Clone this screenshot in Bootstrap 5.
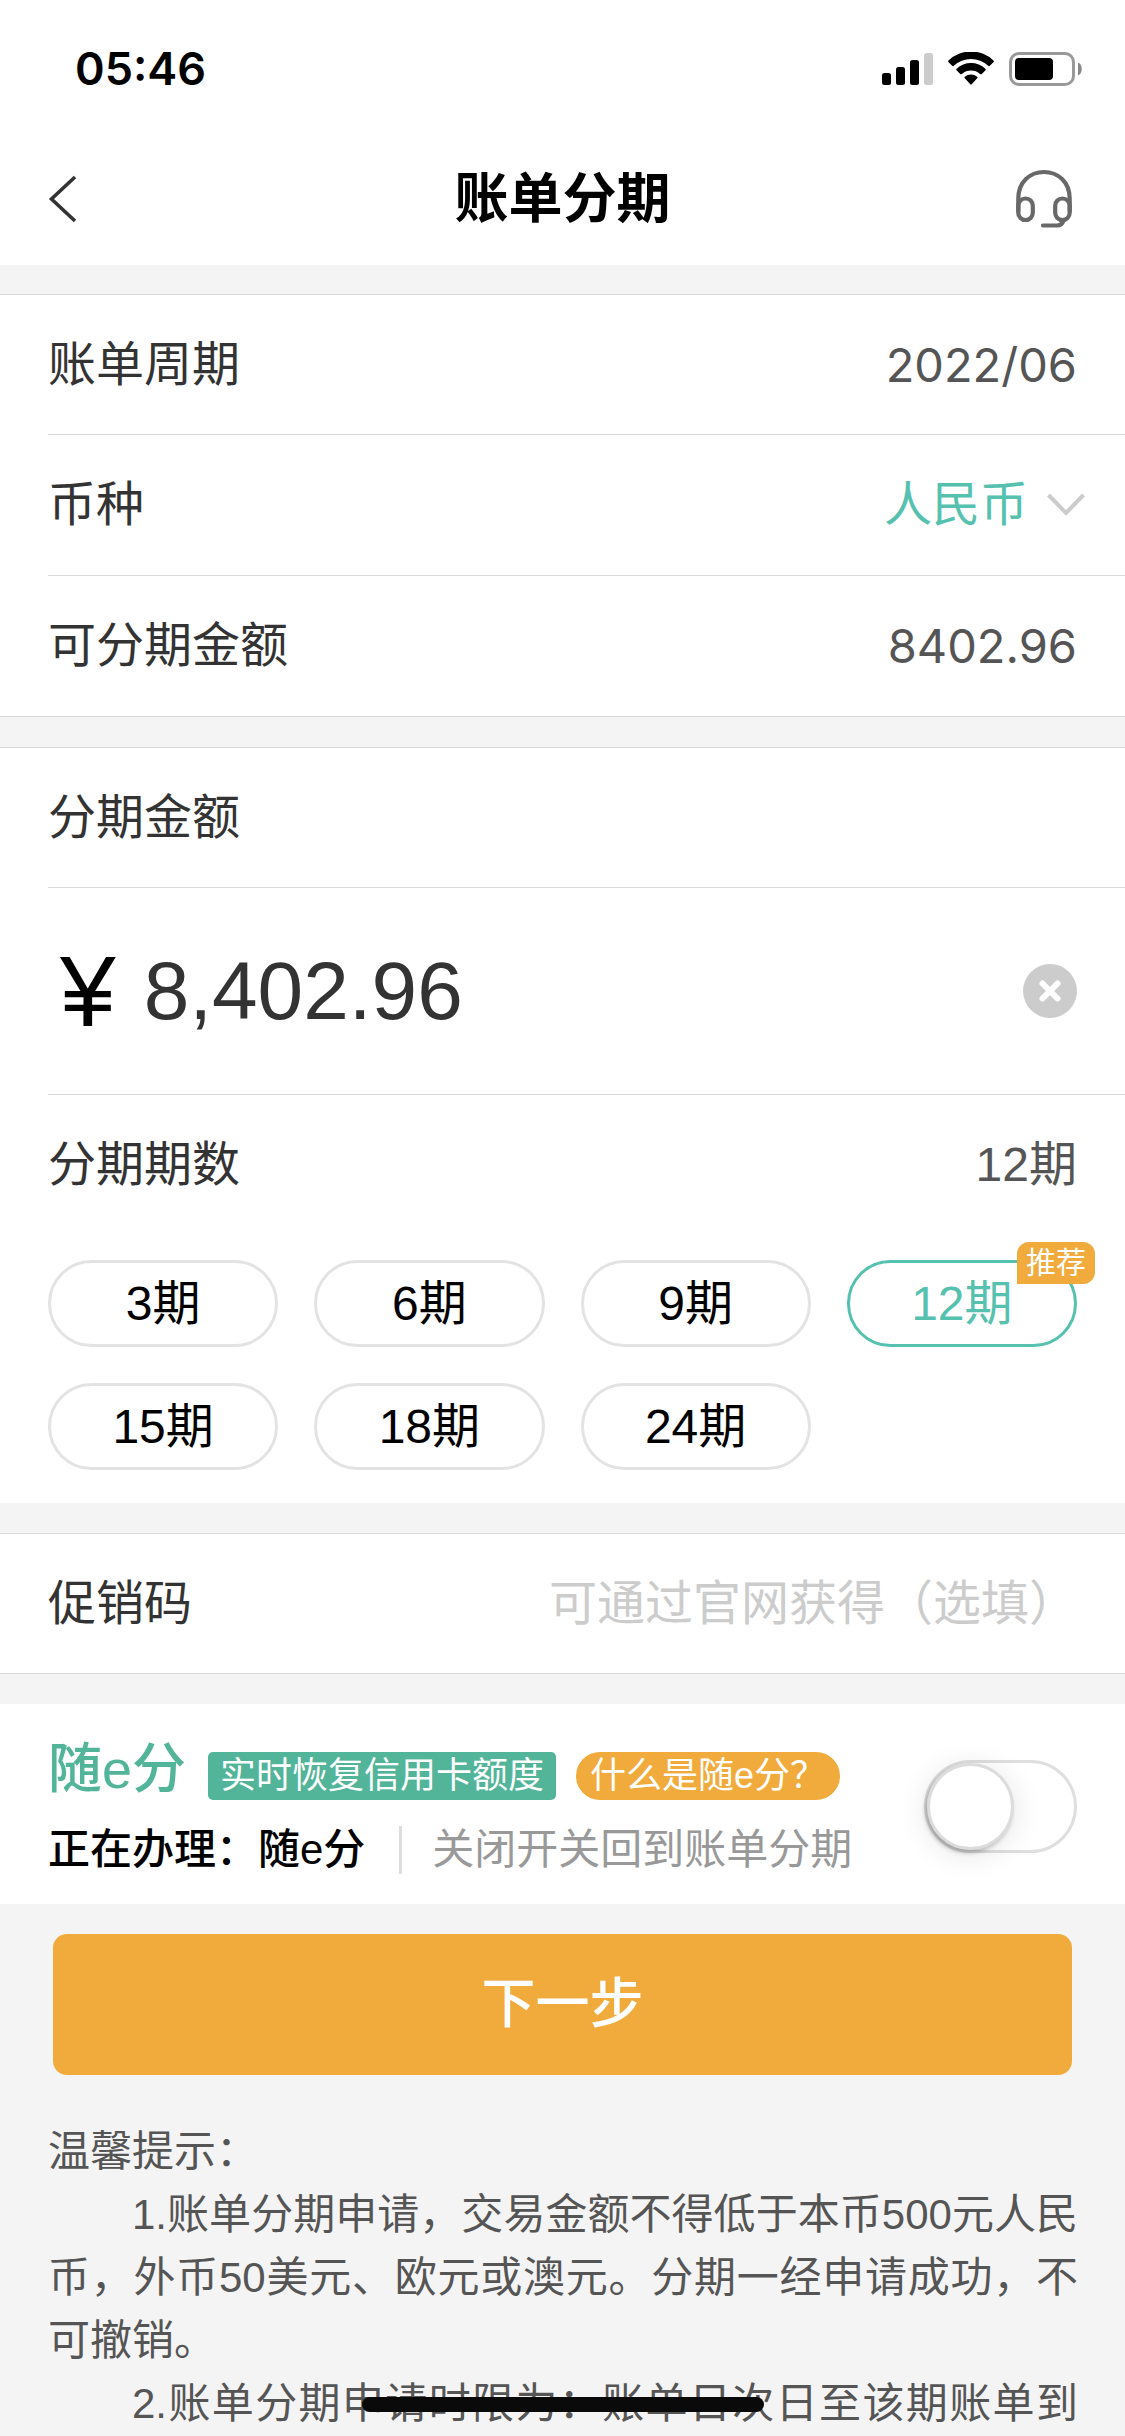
<!DOCTYPE html>
<html lang="zh-CN">
<head>
<meta charset="utf-8">
<meta name="viewport" content="width=device-width, initial-scale=1">
<title>账单分期</title>
<link href="https://cdn.jsdelivr.net/npm/bootstrap@5.3.0/dist/css/bootstrap.min.css" rel="stylesheet">
<style>
  :root { --line: #d9d9d9; --gray: #f4f4f4; --mint: #55c1ae; --green: #52b498; --amber: #f1ab3c; }
  body { font-family: "Liberation Sans", "Noto Sans CJK SC", sans-serif; font-size: 48px; line-height: 72px; color: #333; background: var(--gray); }
  svg { display: block; flex: none; }
  .px-page { padding-left: 48px; padding-right: 48px; }
  .status-bar { height: 132px; padding: 6px 43px 0 75px; font: 600 45px/60px Inter, sans-serif; color: #000; }
  .title-bar { height: 133px; }
  .title-bar h1 { font-size: 54px; line-height: 72px; font-weight: 700; color: #000; }
  .title-bar .side { width: 61px; }
  .group { border-top: 1px solid var(--line); margin-top: 29px; }
  .group-closed { border-bottom: 1px solid var(--line); }
  .group-next { margin-top: 30px; }
  .line-item { margin-left: 48px; padding-right: 48px; height: 139px; }
  .line-item + .line-item { border-top: 1px solid var(--line); height: 141px; }
  .value { color: #555; }
  .value-number { font-family: Inter, "Liberation Sans", sans-serif; font-size: 47px; }
  .field { border: 0; padding: 0; background: none; outline: 0; appearance: none; min-width: 0; color: inherit; line-height: 72px; }
  .currency { color: var(--mint); padding-right: 48px; }
  .currency-arrow { right: -8px; top: 50%; translate: 0 -50%; pointer-events: none; }
  .line-item.amount-row { height: 207px; padding-left: 12px; }
  .yen { font-size: 100px; line-height: 120px; color: #000; }
  .amount { font-size: 82px; line-height: 120px; margin-left: 28px; }
  .promo { text-align: right; }
  .promo::placeholder { color: #ccc; opacity: 1; }
  .terms { display: grid; grid-template-columns: repeat(4, 1fr); gap: 36px; padding: 25px 48px 33px; }
  .term { display: block; height: 87px; border: 3px solid #e3e3e3; border-radius: 44px; line-height: 81px; text-align: center; color: #000; cursor: pointer; }
  .btn-check:checked + .term { border-color: var(--mint); color: var(--mint); }
  .hot-tag { top: -18px; right: -18px; background: var(--amber); color: #fff; font-size: 30px; line-height: 42px; padding: 0 9px; border-radius: 12px 12px 12px 0; }
  .offer { margin-top: 30px; height: 200px; padding-top: 4px; }
  .offer-name { font-size: 54px; line-height: 72px; font-weight: 500; color: var(--green); margin-right: 22px; }
  .tag { font-size: 36px; line-height: 48px; margin-top: 14px; padding: 0 12px; color: #fff; text-decoration: none; }
  .tag-green { background: var(--green); border-radius: 5px; margin-right: 20px; }
  .tag-amber { background: var(--amber); border-radius: 24px; padding: 0 14px; }
  .offer-note { font-size: 42px; line-height: 60px; color: #999; margin-top: 15px; }
  .offer-note strong { font-weight: 500; color: #000; }
  .divider { width: 3px; height: 48px; background: #ddd; margin: 0 30px 0 34px; }
  .toggle { appearance: none; flex: none; width: 153px; height: 93px; margin: 0; border: 3px solid #dfdfdf; border-radius: 47px; background: #fff; }
  .toggle::before { content: ""; display: block; width: 87px; height: 87px; border-radius: 50%; background: #fff; border: 3px solid #dcdcdc; box-shadow: -2px 3px 4px rgba(0,0,0,.22), 0 4px 30px rgba(0,0,0,.11); }
  .toggle:checked::before { margin-left: 60px; }
  .next-wrap { padding: 30px 53px 0; }
  .btn-next { --bs-btn-bg: var(--amber); --bs-btn-color: #fff; --bs-btn-hover-bg: #e59f30; --bs-btn-hover-color: #fff; --bs-btn-border-width: 0; font-size: 54px; line-height: 141px; font-weight: 500; padding: 0; border-radius: 14px; }
  .tips { margin-top: 45px; padding: 0 47px 0 48px; font-size: 42px; line-height: 63px; color: #555; text-align: justify; }
  .tips p { margin: 0; }
  .tips .clause { text-indent: 2em; }
  .tips .clause-full { text-align-last: justify; }
  .home-bar { position: fixed; bottom: 24px; left: 50%; width: 402px; height: 15px; translate: -50% 0; border-radius: 8px; background: #0a0a0a; }
</style>
<script src="https://cdn.jsdelivr.net/npm/bootstrap@5.3.0/dist/js/bootstrap.bundle.min.js"></script>
</head>
<body>
<header class="bg-white">
  <div class="status-bar d-flex justify-content-between align-items-center">
    <span>05:46</span>
    <svg width="200" height="34" viewBox="0 0 200 34" aria-hidden="true">
      <rect x="0" y="21" width="9" height="12" rx="2.5"/>
      <rect x="14" y="15" width="9" height="18" rx="2.5"/>
      <rect x="28" y="8" width="9" height="25" rx="2.5"/>
      <rect x="42" y="1" width="9" height="32" rx="2.5" fill="#ccc"/>
      <path d="M66.3 9.9 L70.2 13.8 Q71 14.5 71.8 13.8 A25 25 0 0 1 106.200 13.800 Q107 14.500 107.800 13.800 L111.700 9.900 Q112.200 9.200 111.500 8.500 A32.500 32.500 0 0 0 66.500 8.500 Q65.800 9.200 66.300 9.900Z"/>
      <path d="M74.500 18.200 L78.200 21.900 Q79 22.600 79.900 21.900 A14 14 0 0 1 98.100 21.900 Q99 22.600 99.800 21.900 L103.500 18.200 Q104.200 17.400 103.400 16.700 A21 21 0 0 0 74.600 16.700 Q73.800 17.400 74.500 18.200Z"/>
      <path d="M82.600 26 L88.300 32.200 Q89 32.900 89.700 32.200 L95.400 26 Q96 25.200 95.200 24.700 A10 10 0 0 0 82.800 24.700 Q82 25.200 82.600 26Z"/>
      <rect x="128.500" y="1.500" width="63" height="31" rx="8.500" fill="none" stroke="#999" stroke-width="3"/>
      <rect x="133" y="6" width="38" height="22" rx="4"/>
      <path d="M196 10.500 C201 12.500 201 21.500 196 23.500Z" fill="#888"/>
    </svg>
  </div>
  <nav class="title-bar px-page d-flex justify-content-between align-items-center" aria-label="页面导航">
    <a href="#" class="side" aria-label="返回">
      <svg width="30" height="48" viewBox="0 0 30 48" fill="none" stroke="#333" stroke-width="3.600"><path d="M27 2 L3.500 24 L27 46"/></svg>
    </a>
    <h1 class="m-0">账单分期</h1>
    <a href="#" class="side d-flex justify-content-end" aria-label="客服">
      <svg width="61" height="60" viewBox="0 0 61 60" fill="none" stroke="#686868" stroke-width="4.200" stroke-linecap="round" stroke-linejoin="round">
        <path d="M2.300 42 V29.500 C2.300 13 14 3 28 3 S53.700 13 53.700 29.500 V42"/>
        <rect x="2.300" y="29.500" width="14.500" height="21.500" rx="7.200"/>
        <rect x="39.200" y="29.500" width="14.500" height="21.500" rx="7.200"/>
        <path d="M47.500 51 C46.500 55.500 43.500 56.500 41 56.500 H27"/>
      </svg>
    </a>
  </nav>
</header>

<main>
  <section class="group group-closed bg-white">
    <div class="line-item d-flex justify-content-between align-items-center"><span>账单周期</span><span class="value value-number">2022/06</span></div>
    <div class="line-item d-flex justify-content-between align-items-center">
      <label for="currency">币种</label>
      <div class="position-relative d-flex">
        <select id="currency" class="field currency"><option>人民币</option></select>
        <svg class="currency-arrow position-absolute" width="38" height="24" viewBox="0 0 38 24" fill="none" stroke="#ccc" stroke-width="4"><path d="M1.500 2 L19 20 L36.500 2"/></svg>
      </div>
    </div>
    <div class="line-item d-flex justify-content-between align-items-center"><span>可分期金额</span><span class="value value-number">8402.96</span></div>
  </section>

  <section class="group group-next bg-white">
    <div class="line-item d-flex align-items-center"><label for="amount">分期金额</label></div>
    <div class="line-item amount-row d-flex align-items-center">
      <span class="yen">¥</span>
      <input id="amount" class="field amount flex-grow-1" type="text" inputmode="decimal" value="8,402.96">
      <button type="button" class="field flex-shrink-0" aria-label="清除金额">
        <svg width="54" height="54" viewBox="0 0 54 54"><circle cx="27" cy="27" r="27" fill="#ccc"/><path d="M19.500 19.500 L34.500 34.500 M34.500 19.500 L19.500 34.500" stroke="#fff" stroke-width="6" stroke-linecap="round"/></svg>
      </button>
    </div>
    <div class="line-item d-flex justify-content-between align-items-center"><span>分期期数</span><span class="value">12期</span></div>
    <div class="terms" role="radiogroup" aria-label="分期期数">
      <div><input class="btn-check" type="radio" name="term" id="t3"><label class="term" for="t3">3期</label></div>
      <div><input class="btn-check" type="radio" name="term" id="t6"><label class="term" for="t6">6期</label></div>
      <div><input class="btn-check" type="radio" name="term" id="t9"><label class="term" for="t9">9期</label></div>
      <div class="position-relative"><input class="btn-check" type="radio" name="term" id="t12" checked><label class="term" for="t12">12期</label><span class="hot-tag position-absolute">推荐</span></div>
      <div><input class="btn-check" type="radio" name="term" id="t15"><label class="term" for="t15">15期</label></div>
      <div><input class="btn-check" type="radio" name="term" id="t18"><label class="term" for="t18">18期</label></div>
      <div><input class="btn-check" type="radio" name="term" id="t24"><label class="term" for="t24">24期</label></div>
    </div>
  </section>

  <section class="group group-next group-closed bg-white">
    <div class="line-item d-flex align-items-center">
      <label for="promo" class="flex-shrink-0">促销码</label>
      <input id="promo" class="field promo flex-grow-1" type="text" placeholder="可通过官网获得（选填）">
    </div>
  </section>

  <section class="offer bg-white px-page d-flex justify-content-between align-items-center">
    <div>
      <div class="d-flex align-items-center">
        <label for="offer-switch" class="offer-name">随e分</label>
        <span class="tag tag-green">实时恢复信用卡额度</span>
        <a href="#" class="tag tag-amber">什么是随e分？</a>
      </div>
      <div class="offer-note d-flex align-items-center">
        <strong>正在办理：随e分</strong><span class="divider"></span><span>关闭开关回到账单分期</span>
      </div>
    </div>
    <input id="offer-switch" class="toggle" type="checkbox" role="switch">
  </section>

  <div class="next-wrap"><button type="button" class="btn btn-next w-100">下一步</button></div>

  <section class="tips">
    <p>温馨提示：</p>
    <p class="clause">1.账单分期申请，交易金额不得低于本币500元人民币，外币50美元、欧元或澳元。分期一经申请成功，不可撤销。</p>
    <p class="clause clause-full">2.账单分期申请时限为：账单日次日至该期账单到</p>
  </section>
</main>
<div class="home-bar"></div>
</body>
</html>
